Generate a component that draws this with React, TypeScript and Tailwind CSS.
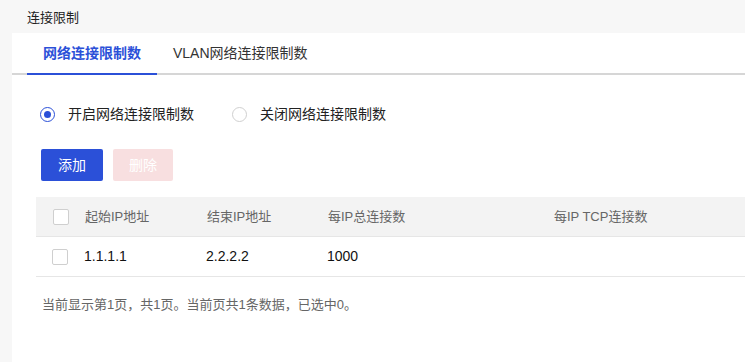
const cjk = "font-['Liberation_Sans','Noto_Sans_CJK_SC',sans-serif]"

function Radio({ checked, label }: { checked: boolean; label: string }) {
  return (
    <label className="flex items-center gap-[13px]">
      <span
        className={
          'flex h-[15px] w-[15px] items-center justify-center rounded-full border bg-white ' +
          (checked ? 'border-[#2b50d8]' : 'border-[#d0d0d0]')
        }
      >
        {checked && <span className="h-[7px] w-[7px] rounded-full bg-[#2b50d8]" />}
      </span>
      <span className="text-[14px] text-[#222]">{label}</span>
    </label>
  )
}

function Box() {
  return <span className="block h-[16px] w-[16px] rounded-[2px] border border-[#cfcfcf] bg-white" />
}

export default function App() {
  return (
    <div className={`h-[362px] w-[745px] overflow-hidden bg-[#f7f7f7] ${cjk}`}>
      <div className="flex h-[33px] items-center pl-[27px] pt-[2px] text-[13px] text-[#222]">连接限制</div>
      <div className="ml-[12px] h-[329px] bg-white">
        <div className="flex h-[42px] items-end border-b-2 border-[#d6d6d6] pl-[15px]">
          <div className="-mb-[2px] flex h-[42px] w-[130px] items-center justify-center border-b-2 border-[#2b50d8] text-[14px] font-bold text-[#2b50d8]">
            网络连接限制数
          </div>
          <div className="flex h-[40px] items-center pl-[16px] text-[14px] text-[#333]">VLAN网络连接限制数</div>
        </div>

        <div className="flex gap-[38px] pl-[28px] pt-[29px]">
          <Radio checked label="开启网络连接限制数" />
          <Radio checked={false} label="关闭网络连接限制数" />
        </div>

        <div className="flex gap-[10px] pl-[29px] pt-[24px]">
          <button className="h-[32px] w-[62px] rounded-[2px] bg-[#2b50d8] text-[14px] text-white">添加</button>
          <button className="h-[32px] w-[60px] rounded-[2px] bg-[#f8dfe0] text-[14px] text-white">删除</button>
        </div>

        <div className="ml-[24px] mt-[16px] w-[760px] text-[13px]">
          <div className="flex h-[40px] items-center border-b border-[#e6e6e6] bg-[#f3f3f3] text-[#666]">
            <div className="w-[49px] pl-[17px]"><Box /></div>
            <div className="w-[122px]">起始IP地址</div>
            <div className="w-[121px]">结束IP地址</div>
            <div className="w-[226px]">每IP总连接数</div>
            <div>每IP TCP连接数</div>
          </div>
          <div className="flex h-[40px] items-center border-b border-[#e6e6e6] text-[14px] text-[#111]">
            <div className="w-[48px] pl-[16px]"><Box /></div>
            <div className="w-[122px]">1.1.1.1</div>
            <div className="w-[121px]">2.2.2.2</div>
            <div>1000</div>
          </div>
        </div>

        <div className="pl-[30px] pt-[18px] text-[13px] text-[#666]">
          当前显示第1页，共1页。当前页共1条数据，已选中0。
        </div>
      </div>
    </div>
  )
}
